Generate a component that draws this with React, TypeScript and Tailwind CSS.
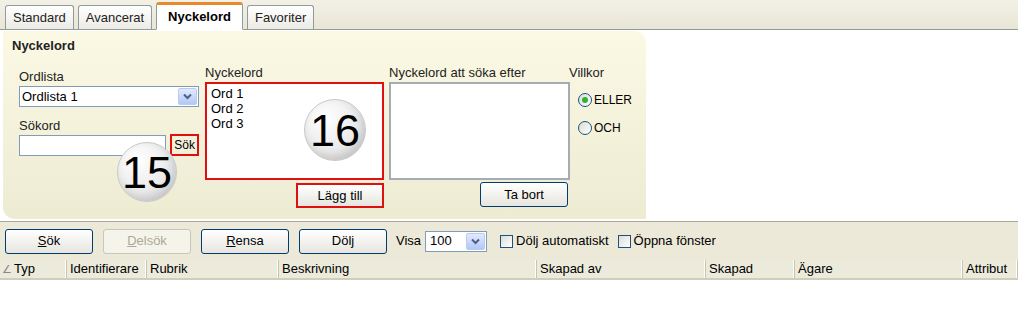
import React from 'react';

const columns = [
  { label: 'Typ', width: 'w-[67px]', sort: true },
  { label: 'Identifierare', width: 'w-[80px]' },
  { label: 'Rubrik', width: 'w-[132px]' },
  { label: 'Beskrivning', width: 'w-[258px]' },
  { label: 'Skapad av', width: 'w-[169px]' },
  { label: 'Skapad', width: 'w-[89px]' },
  { label: 'Ägare', width: 'w-[168px]' },
  { label: 'Attribut', width: 'flex-1' },
];

const tabs = ['Standard', 'Avancerat', 'Nyckelord', 'Favoriter'];

const DropButton = () => (
  <div className="w-[19px] h-full flex items-center justify-center rounded-[2px] border border-[#b9cbf3] bg-gradient-to-b from-[#e1eafe] to-[#b4c8f6]">
    <svg width="9" height="7" viewBox="0 0 9 7">
      <path d="M1 1.5 L4.5 5 L8 1.5" fill="none" stroke="#4d6185" strokeWidth="2" />
    </svg>
  </div>
);

const XpButton = ({ children, disabled = false, className = '' }: { children: React.ReactNode; disabled?: boolean; className?: string }) => (
  <div
    className={`h-[25px] w-[88px] flex items-center justify-center rounded-[3px] border ${
      disabled
        ? 'border-[#c9c7ba] text-[#aca899] bg-[#f5f4ea]'
        : 'border-[#003c74] bg-gradient-to-b from-white to-[#e6e5de] text-black'
    } ${className}`}
  >
    {children}
  </div>
);

const Badge = ({ n, className }: { n: number; className: string }) => (
  <div
    className={`absolute rounded-full border border-[#c8c8c8] flex items-center justify-center text-[45px] leading-none text-black shadow-[inset_-3px_-4px_8px_rgba(0,0,0,0.12)] bg-[radial-gradient(circle_at_35%_30%,#ffffff,#e9e9e9_60%,#d4d4d4)] ${className}`}
  >
    {n}
  </div>
);

const Check = () => (
  <div className="w-[13px] h-[13px] border border-[#1c5180] bg-gradient-to-br from-[#dcdcd7] to-white" />
);

export default function App() {
  return (
    <div
      className="w-[1018px] h-[310px] bg-white text-[13px] text-black overflow-hidden"
      style={{ fontFamily: '"Liberation Sans", Arial, sans-serif' }}
    >
      {/* tab strip */}
      <div className="h-[30px] bg-gradient-to-b from-[#f3f1e6] to-[#e9e6d6] flex items-end pl-[5px] gap-[4px] border-b border-[#919b9c]">
        {tabs.map((t) =>
          t === 'Nyckelord' ? (
            <div
              key={t}
              className="h-[28px] -mb-px px-[11px] flex items-center bg-white border border-[#919b9c] border-b-white border-t-[3px] border-t-[#e68b2c] rounded-t-[3px] font-bold"
            >
              {t}
            </div>
          ) : (
            <div
              key={t}
              className="h-[24px] px-[7px] flex items-center bg-gradient-to-b from-white to-[#ecebe5] border border-[#919b9c] border-b-0 rounded-t-[3px] text-[#222]"
            >
              {t}
            </div>
          )
        )}
      </div>

      {/* keyword panel */}
      <div className="h-[191px] pt-px pl-[3px]">
        <div className="relative w-[643px] h-[188px] rounded-tr-[12px] rounded-bl-[12px] bg-gradient-to-b from-[#fbf9e4] to-[#eeebd3] pt-[7px] pl-[9px]">
          <div className="font-bold h-[16px] leading-[16px] text-[#222]">Nyckelord</div>

          <div className="flex mt-[11px] pl-[7px]">
            {/* Ordlista / Sökord */}
            <div className="w-[180px] pt-[4px]">
              <div className="leading-[16px] text-[#222]">Ordlista</div>
              <div className="mt-px h-[21px] flex items-center border border-[#7f9db9] bg-white pl-[2px] p-px">
                <span className="flex-1">Ordlista 1</span>
                <DropButton />
              </div>
              <div className="mt-[11px] leading-[16px] text-[#222]">Sökord</div>
              <div className="mt-px flex items-start">
                <div className="w-[148px] h-[21px] border border-[#7f9db9] bg-white" />
                <div className="ml-[4px] -mt-px h-[22px] px-[2px] flex items-center border-2 border-[#e01010] text-[12px]">
                  Sök
                </div>
              </div>
            </div>

            {/* Nyckelord list */}
            <div className="w-[179px] ml-[6px]">
              <div className="leading-[16px] text-[#222]">Nyckelord</div>
              <div className="mt-px h-[98px] border-2 border-[#e01010] bg-white px-[4px] pt-[2px] leading-[15px]">
                <div>Ord 1</div>
                <div>Ord 2</div>
                <div>Ord 3</div>
              </div>
              <div className="flex justify-end mt-[3px]">
                <XpButton className="!border-2 !border-[#e01010] !rounded-none">Lägg till</XpButton>
              </div>
            </div>

            {/* Nyckelord att söka efter */}
            <div className="w-[181px] ml-[5px]">
              <div className="leading-[16px] text-[#222]">Nyckelord att söka efter</div>
              <div className="mt-px h-[98px] border-2 border-[#a5acb5] bg-white" />
              <div className="flex justify-end mt-[2px] pr-[2px]">
                <XpButton>Ta bort</XpButton>
              </div>
            </div>

            {/* Villkor */}
            <div className="ml-[-1px]">
              <div className="leading-[16px] text-[#222]">Villkor</div>
              <div className="mt-[10px] ml-[9px] flex items-center gap-[2px]">
                <div className="w-[14px] h-[14px] rounded-full border border-[#1c5180] bg-gradient-to-br from-[#dcdcd7] to-white flex items-center justify-center">
                  <div className="w-[6px] h-[6px] rounded-full bg-[#31b331]" />
                </div>
                <span className="text-[12px]">ELLER</span>
              </div>
              <div className="mt-[10px] ml-[9px] flex items-center gap-[2px]">
                <div className="w-[14px] h-[14px] rounded-full border border-[#1c5180] bg-gradient-to-br from-[#dcdcd7] to-white" />
                <span className="text-[12px]">OCH</span>
              </div>
            </div>
          </div>

          <Badge n={15} className="left-[114px] top-[111px] w-[60px] h-[60px]" />
          <Badge n={16} className="left-[301px] top-[68px] w-[62px] h-[62px]" />
        </div>
      </div>

      {/* toolbar */}
      <div className="h-[39px] border-t border-[#aca899] bg-[#ece9d8] flex items-center pl-[5px] text-[13px]">
        <XpButton><span><u>S</u>ök</span></XpButton>
        <XpButton disabled className="ml-[10px]"><span><u>D</u>elsök</span></XpButton>
        <XpButton className="ml-[10px]"><span><u>R</u>ensa</span></XpButton>
        <XpButton className="ml-[10px]">Dölj</XpButton>
        <span className="ml-[9px]">Visa</span>
        <div className="ml-[4px] w-[62px] h-[21px] flex items-center border border-[#7f9db9] bg-white p-px pl-[4px]">
          <span className="flex-1">100</span>
          <DropButton />
        </div>
        <div className="ml-[13px]"><Check /></div>
        <span className="ml-[3px]">Dölj automatiskt</span>
        <div className="ml-[9px]"><Check /></div>
        <span className="ml-[3px]">Öppna fönster</span>
      </div>

      {/* column header */}
      <div className="h-[20px] flex bg-[#ebeadb] border-b-2 border-[#d0cdbd]">
        {columns.map((c) => (
          <div
            key={c.label}
            className={`${c.width} h-full flex items-center pl-[3px] border-r border-[#c7c5b2] shadow-[inset_-1px_0_0_#ffffff] whitespace-nowrap`}
          >
            {c.sort && <span className="text-[#888] text-[11px] mr-[2px] -ml-[1px]">∠</span>}
            {c.label}
          </div>
        ))}
      </div>
    </div>
  );
}
